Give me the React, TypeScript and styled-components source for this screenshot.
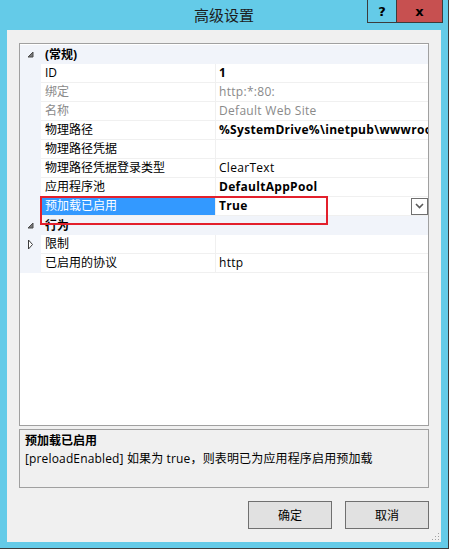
import React from "react";
import styled, { createGlobalStyle } from "styled-components";

const Global = createGlobalStyle`
  html, body { margin: 0; padding: 0; background: #ffffff; }
  body { font-family: "Open Sans", "Noto Sans CJK SC", sans-serif; font-size: 12px; color: #000; }
  * { box-sizing: border-box; }
`;

const Window = styled.div`
  width: 449px;
  height: 549px;
  background: #64cbe8;
  border-right: 1px solid #3c3c3c;
  border-bottom: 1px solid #3c3c3c;
  display: flex;
  flex-direction: column;
`;

const TitleBar = styled.div`
  height: 30px;
  flex: none;
  display: grid;
  grid-template-columns: 1fr auto 1fr;
  align-items: start;
`;

const Title = styled.div`
  font-family: "Noto Sans CJK SC", sans-serif;
  font-size: 15px;
  line-height: 30px;
  color: #1c1c1c;
`;

const Caption = styled.div`
  display: flex;
  justify-content: flex-end;
  padding-right: 5px;
  grid-column: 3;
`;

const CapBtn = styled.div<{ $close?: boolean }>`
  width: ${(p) => (p.$close ? 47 : 30)}px;
  height: 23px;
  margin-left: ${(p) => (p.$close ? -1 : 0)}px;
  border: 1px solid #3c3c3c;
  border-top: none;
  background: ${(p) => (p.$close ? "#c75050" : "transparent")};
  display: flex;
  align-items: center;
  justify-content: center;
  font-family: "DejaVu Sans", sans-serif;
  font-weight: bold;
  font-size: 13px;
  color: #000;
`;

const Client = styled.div`
  flex: 1;
  margin: 0 7px 6px 7px;
  background: #f0f0f0;
  padding: 13px 12px 13px 12px;
  display: flex;
  flex-direction: column;
  position: relative;
`;

const Grid = styled.div`
  flex: 1;
  border: 1px solid #a0a0a0;
  background: #ffffff;
  padding-top: 1px;
  position: relative;
  overflow: hidden;
`;

const Row = styled.div<{ $cat?: boolean }>`
  display: grid;
  grid-template-columns: 21px 174px 1px 212px;
  height: 19px;
  background: ${(p) => (p.$cat ? "#f1f4fa" : "#ffffff")};
`;

const Gutter = styled.div`
  background: #f1f4fa;
  display: flex;
  align-items: center;
  justify-content: center;
`;

const NameCell = styled.div<{ $sel?: boolean; $dim?: boolean }>`
  padding-left: 4px;
  line-height: 18px;
  border-bottom: 1px solid #f0f0f0;
  white-space: nowrap;
  overflow: hidden;
  background: ${(p) => (p.$sel ? "#3399ff" : "transparent")};
  color: ${(p) => (p.$sel ? "#ffffff" : p.$dim ? "#8a8a8a" : "#000000")};
`;

const Sep = styled.div`
  background: #f0f0f0;
`;

const ValueCell = styled.div<{ $bold?: boolean; $dim?: boolean }>`
  padding-left: 3px;
  line-height: 18px;
  letter-spacing: 0.3px;
  border-bottom: 1px solid #f0f0f0;
  white-space: nowrap;
  overflow: hidden;
  font-weight: ${(p) => (p.$bold ? 700 : 400)};
  color: ${(p) => (p.$dim ? "#8a8a8a" : "#000000")};
  display: flex;
  align-items: center;
`;

const CatLabel = styled.div`
  grid-column: 2 / 5;
  padding-left: 4px;
  line-height: 19px;
  font-weight: 700;
  white-space: nowrap;
`;

const DropBtn = styled.div`
  margin-left: auto;
  width: 17px;
  height: 17px;
  border: 1px solid #707070;
  background: #ffffff;
  display: flex;
  align-items: center;
  justify-content: center;
  flex: none;
`;

const Highlight = styled.div`
  position: absolute;
  left: 20px;
  top: 152px;
  width: 288px;
  height: 29px;
  border: 2px solid #e3202c;
  pointer-events: none;
`;

const Desc = styled.div`
  flex: none;
  height: 59px;
  margin-top: 3px;
  border: 1px solid #a0a0a0;
  background: #f0f0f0;
  padding: 2px 5px;
  line-height: 18px;
`;

const DescTitle = styled.div`
  font-weight: 700;
`;

const DescText = styled.div`
  letter-spacing: 0.15px;
`;

const Buttons = styled.div`
  flex: none;
  display: flex;
  justify-content: flex-end;
  gap: 13px;
  margin-top: 13px;
`;

const Button = styled.div`
  width: 84px;
  height: 28px;
  border: 1px solid #707070;
  background: #e1e1e1;
  display: flex;
  align-items: center;
  justify-content: center;
`;

const Grip = styled.svg`
  position: absolute;
  right: 1px;
  bottom: 1px;
`;

const ExpandedIcon = () => (
  <svg width="7" height="7" viewBox="0 0 7 7">
    <polygon points="6,1 6,6 1,6" fill="#7a7a7a" stroke="#4a4a4a" strokeWidth="1" />
  </svg>
);

const CollapsedIcon = () => (
  <svg width="7" height="11" viewBox="0 0 7 11">
    <polygon points="1.5,1 5.5,5.5 1.5,10" fill="#ffffff" stroke="#3c3c3c" strokeWidth="1" />
  </svg>
);

type Prop = {
  name: string;
  value?: string;
  bold?: boolean;
  dim?: boolean;
  sel?: boolean;
  drop?: boolean;
  collapsed?: boolean;
};

type Item = { cat: string } | Prop;

const items: Item[] = [
  { cat: "(常规)" },
  { name: "ID", value: "1", bold: true },
  { name: "绑定", value: "http:*:80:", dim: true },
  { name: "名称", value: "Default Web Site", dim: true },
  { name: "物理路径", value: "%SystemDrive%\\inetpub\\wwwroot", bold: true },
  { name: "物理路径凭据", value: "" },
  { name: "物理路径凭据登录类型", value: "ClearText" },
  { name: "应用程序池", value: "DefaultAppPool", bold: true },
  { name: "预加载已启用", value: "True", bold: true, sel: true, drop: true },
  { cat: "行为" },
  { name: "限制", value: "", collapsed: true },
  { name: "已启用的协议", value: "http" },
];

export default function App() {
  return (
    <>
      <Global />
      <Window>
        <TitleBar>
          <Title style={{ gridColumn: 2 }}>高级设置</Title>
          <Caption>
            <CapBtn>?</CapBtn>
            <CapBtn $close>x</CapBtn>
          </Caption>
        </TitleBar>
        <Client>
          <Grid>
            {items.map((it, i) =>
              "cat" in it ? (
                <Row key={i} $cat>
                  <Gutter>
                    <ExpandedIcon />
                  </Gutter>
                  <CatLabel>{it.cat}</CatLabel>
                </Row>
              ) : (
                <Row key={i}>
                  <Gutter>{it.collapsed ? <CollapsedIcon /> : null}</Gutter>
                  <NameCell $sel={it.sel} $dim={it.dim}>
                    {it.name}
                  </NameCell>
                  <Sep />
                  <ValueCell $bold={it.bold} $dim={it.dim}>
                    {it.value}
                    {it.drop ? (
                      <DropBtn>
                        <svg width="9" height="6" viewBox="0 0 9 6">
                          <polyline points="1,1 4.5,4.5 8,1" fill="none" stroke="#5a5a5a" strokeWidth="1.6" />
                        </svg>
                      </DropBtn>
                    ) : null}
                  </ValueCell>
                </Row>
              )
            )}
            <Highlight />
          </Grid>
          <Desc>
            <DescTitle>预加载已启用</DescTitle>
            <DescText>[preloadEnabled] 如果为 true，则表明已为应用程序启用预加载</DescText>
          </Desc>
          <Buttons>
            <Button>确定</Button>
            <Button>取消</Button>
          </Buttons>
          <Grip width="10" height="10" viewBox="0 0 10 10">
            {[
              [8, 2],
              [5, 5],
              [8, 5],
              [2, 8],
              [5, 8],
              [8, 8],
            ].map(([x, y], i) => (
              <rect key={i} x={x} y={y} width="1" height="1" fill="#a0a0a0" />
            ))}
          </Grip>
        </Client>
      </Window>
    </>
  );
}
